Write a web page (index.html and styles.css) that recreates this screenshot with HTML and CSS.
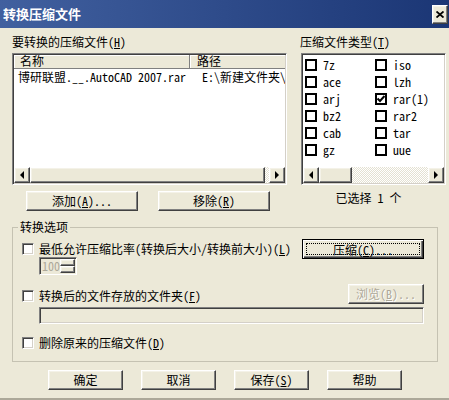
FILE: index.html
```html
<!DOCTYPE html>
<html lang="zh-CN">

<head>
    <meta charset="UTF-8">
    <title>转换压缩文件</title>
    <link rel="stylesheet" href="styles.css">
</head>

<body>
    <div class="window">
        <div class="titlebar">
            <span class="title">转换压缩文件</span>
            <span class="close raised">
                <svg width="8" height="7" viewBox="0 0 8 7"><path d="M0.5 0.5l7 6M7.5 0.5l-7 6" stroke="#000" stroke-width="1.8"/></svg>
            </span>
        </div>
        <div class="content">
            <div class="top">
                <div class="files">
                    <div class="label">要转换的压缩文件(<u>H</u>)</div>
                    <div class="listbox">
                        <div class="list-head">
                            <div class="head-cell name">名称</div>
                            <div class="head-cell path">路径</div>
                        </div>
                        <div class="list-body">
                            <div class="list-row">
                                <span class="cell name">博研联盟.__.AutoCAD 2007.rar</span>
                                <span class="cell path">E:\新建文件夹\</span>
                            </div>
                        </div>
                        <div class="hscroll">
                            <span class="sb-btn raised"><i class="arr-left"></i></span>
                            <span class="sb-thumb raised files-thumb"></span>
                            <span class="sb-track"></span>
                            <span class="sb-btn raised"><i class="arr-right"></i></span>
                        </div>
                    </div>
                    <div class="btn-row">
                        <button class="btn wide">添加(<u>A</u>)...</button>
                        <button class="btn wide">移除(<u>R</u>)</button>
                    </div>
                </div>
                <div class="types">
                    <div class="label">压缩文件类型(<u>T</u>)</div>
                    <div class="listbox">
                        <div class="type-grid">
                            <div class="type"><span class="tbox"></span><span>7z</span></div>
                            <div class="type"><span class="tbox"></span><span>iso</span></div>
                            <div class="type"><span class="tbox"></span><span>ace</span></div>
                            <div class="type"><span class="tbox"></span><span>lzh</span></div>
                            <div class="type"><span class="tbox"></span><span>arj</span></div>
                            <div class="type"><span class="tbox"><svg width="8" height="8" viewBox="0 0 8 8"><path d="M0.5 3.5l2.5 2.5l4.5-5" fill="none" stroke="#000" stroke-width="2"/></svg></span><span>rar(1)</span></div>
                            <div class="type"><span class="tbox"></span><span>bz2</span></div>
                            <div class="type"><span class="tbox"></span><span>rar2</span></div>
                            <div class="type"><span class="tbox"></span><span>cab</span></div>
                            <div class="type"><span class="tbox"></span><span>tar</span></div>
                            <div class="type"><span class="tbox"></span><span>gz</span></div>
                            <div class="type"><span class="tbox"></span><span>uue</span></div>
                        </div>
                        <div class="hscroll">
                            <span class="sb-btn raised"><i class="arr-left"></i></span>
                            <span class="sb-thumb raised types-thumb"></span>
                            <span class="sb-track"></span>
                            <span class="sb-btn raised"><i class="arr-right"></i></span>
                        </div>
                    </div>
                    <div class="count">已选择 1 个</div>
                </div>
            </div>

            <fieldset class="group">
                <legend>转换选项</legend>
                <div class="opt-row">
                    <div class="opt-left first">
                        <div class="check"><span class="cbox"></span><span>最低允许压缩比率(转换后大小/转换前大小)(<u>L</u>)</span></div>
                        <div class="spin">
                            <span class="spin-val">100</span>
                            <span class="spin-btns"><span class="raised"></span><span class="raised"></span></span>
                        </div>
                    </div>
                    <button class="btn default"><span class="focus">压缩(<u>C</u>)...</span></button>
                </div>
                <div class="opt-row second">
                    <div class="opt-left">
                        <div class="check"><span class="cbox"></span><span>转换后的文件存放的文件夹(<u>F</u>)</span></div>
                    </div>
                    <button class="btn browse" disabled>浏览(<u>B</u>)...</button>
                </div>
                <div class="folder-input"></div>
                <div class="check last"><span class="cbox"></span><span>删除原来的压缩文件(<u>D</u>)</span></div>
            </fieldset>

            <div class="footer">
                <button class="btn">确定</button>
                <button class="btn">取消</button>
                <button class="btn">保存(<u>S</u>)</button>
                <button class="btn">帮助</button>
            </div>
        </div>
    </div>
</body>

</html>
```

FILE: styles.css
```css
* {
    margin: 0;
    padding: 0;
    box-sizing: border-box;
}

body {
    margin: 0;
    font: 12px/14px "Noto Sans Mono CJK SC", "Noto Sans CJK SC", monospace;
    color: #000;
    background: #ece9d8;
}

u {
    text-decoration: underline;
    text-underline-offset: 1px;
}

.window {
    width: 449px;
    height: 400px;
    background: #ece9d8;
    border-bottom: 2px solid #aca899;
}

/* title bar */
.titlebar {
    height: 28px;
    display: flex;
    align-items: center;
    justify-content: space-between;
    padding: 0 1px 0 3px;
    background: linear-gradient(to right, #41609f, #1b3675);
}

.title {
    color: #fff;
    font-weight: bold;
    font-size: 13px;
}

.close {
    width: 16px;
    height: 19px;
    display: flex;
    align-items: center;
    justify-content: center;
    background: #ece9d8;
}

/* 3d borders */
.raised {
    background: #ece9d8;
    border: 1px solid;
    border-color: #fff #404040 #404040 #fff;
    box-shadow: inset -1px -1px #808080, inset 1px 1px #f4f2e8;
}

.content {
    padding-left: 12px;
}

.top {
    display: flex;
    gap: 14px;
}

.files {
    width: 275px;
}

.types {
    width: 145px;
}

.label {
    margin-top: 7px;
    height: 14px;
    white-space: nowrap;
}

.types .label {
    margin-left: -1px;
}

.listbox {
    margin-top: 4px;
    height: 132px;
    display: flex;
    flex-direction: column;
    background: #fff;
    border: 1px solid;
    border-color: #808080 #fff #fff #808080;
    box-shadow: inset 1px 1px #404040, inset -1px -1px #d4d0c8;
    padding: 1px;
}

.list-head {
    display: flex;
    height: 14px;
}

.head-cell {
    height: 14px;
    line-height: 12px;
    background: #ece9d8;
    border-right: 1px solid #808080;
    border-bottom: 1px solid #808080;
    box-shadow: inset 1px 1px #fff;
    white-space: nowrap;
}

.head-cell.name {
    width: 176px;
    padding-left: 6px;
}

.head-cell.path {
    flex: 1;
    padding-left: 7px;
    border-right: 0;
}

.list-body {
    flex: 1;
    overflow: hidden;
}

.list-row {
    display: flex;
    height: 16px;
    padding-top: 1px;
    white-space: nowrap;
}

.cell.name {
    width: 176px;
    flex: none;
    padding-left: 4px;
}

.cell.path {
    flex: none;
    padding-left: 12px;
}

/* scrollbars */
.hscroll {
    display: flex;
    height: 16px;
}

.sb-btn {
    width: 16px;
    height: 16px;
    display: flex;
    align-items: center;
    justify-content: center;
}

.arr-left,
.arr-right {
    width: 0;
    height: 0;
    border-top: 4px solid transparent;
    border-bottom: 4px solid transparent;
}

.arr-left {
    border-right: 4px solid #000;
    margin-left: -1px;
}

.arr-right {
    border-left: 4px solid #000;
}

.sb-thumb {
    height: 16px;
}

.files-thumb {
    width: 235px;
}

.types-thumb {
    width: 33px;
}

.sb-track {
    flex: 1;
    background: repeating-conic-gradient(#fff 0 25%, #e4e1d2 0 50%) 0 0 / 2px 2px;
}

/* type list */
.type-grid {
    flex: 1;
    display: grid;
    grid-template-columns: 70px 70px;
    grid-auto-rows: 17px;
    padding-left: 2px;
    padding-top: 1px;
}

.type {
    display: flex;
    align-items: center;
    gap: 6px;
    white-space: nowrap;
}

.tbox {
    width: 12px;
    height: 12px;
    border: 2px solid #000;
    background: #fff;
    display: flex;
    align-items: center;
    justify-content: center;
}

.count {
    margin-top: 6px;
    text-align: center;
    padding-right: 10px;
}

/* buttons */
.btn {
    height: 20px;
    width: 75px;
    font: inherit;
    color: #000;
    background: #ece9d8;
    border: 1px solid;
    border-color: #fff #404040 #404040 #fff;
    box-shadow: inset -1px -1px #808080, inset 1px 1px #f4f2e8;
    line-height: 16px;
    padding: 0;
    white-space: nowrap;
}

.btn-row {
    display: flex;
    gap: 20px;
    margin-top: 6px;
    padding-left: 14px;
}

.btn.wide {
    width: 112px;
}

.btn.default {
    width: 122px;
    border: 1px solid #000;
    box-shadow: inset 1px 1px #fff, inset -1px -1px #404040, inset -2px -2px #808080;
    padding: 3px;
}

.focus {
    display: block;
    height: 12px;
    line-height: 11px;
    border: 1px dotted #000;
}

.btn.browse {
    width: 76px;
    color: #aca899;
    text-shadow: 1px 1px #fff;
}

/* group box */
.group {
    margin-top: 9px;
    width: 426px;
    border: 1px solid #c5c2b2;
    padding: 5px 13px 11px 9px;
    min-width: 0;
}

.group legend {
    margin-left: -4px;
    padding: 0 2px;
    line-height: 14px;
}

.opt-row {
    display: flex;
    justify-content: space-between;
    align-items: flex-start;
}

.opt-row.second {
    margin-top: 9px;
}

.opt-left.first {
    padding-top: 3px;
}

.opt-row.second .opt-left {
    padding-top: 5px;
}

.check {
    display: flex;
    align-items: center;
    gap: 5px;
    height: 14px;
    white-space: nowrap;
}

.check.last {
    margin-top: 12px;
}

.cbox {
    width: 12px;
    height: 12px;
    background: #fff;
    border: 1px solid;
    border-color: #808080 #fff #fff #808080;
    box-shadow: inset 1px 1px #404040, inset -1px -1px #d4d0c8;
}

.spin {
    margin: 1px 0 0 17px;
    width: 38px;
    height: 18px;
    display: flex;
    border: 1px solid;
    border-color: #808080 #fff #fff #808080;
    box-shadow: inset 1px 1px #404040;
    padding: 1px 1px 1px 2px;
}

.spin-val {
    flex: 1;
    color: #aca899;
    line-height: 14px;
}

.spin-btns {
    width: 15px;
    display: flex;
    flex-direction: column;
}

.spin-btns span {
    flex: 1;
}

.folder-input {
    margin: 3px 0 0 17px;
    height: 17px;
    border: 1px solid;
    border-color: #808080 #fff #fff #808080;
    box-shadow: inset 1px 1px #404040, inset -1px -1px #d4d0c8;
}

.footer {
    display: flex;
    gap: 18px;
    margin-top: 8px;
    padding-left: 36px;
}
```
